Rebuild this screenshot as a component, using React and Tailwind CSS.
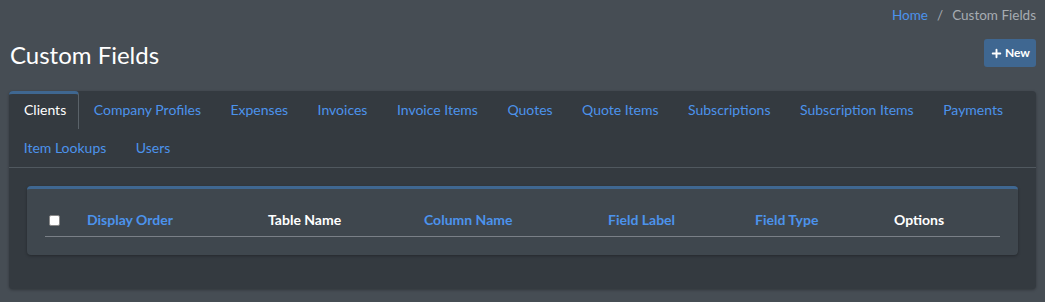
import { Plus } from "lucide-react";

const tabs = [
  "Clients",
  "Company Profiles",
  "Expenses",
  "Invoices",
  "Invoice Items",
  "Quotes",
  "Quote Items",
  "Subscriptions",
  "Subscription Items",
  "Payments",
  "Item Lookups",
  "Users",
];

const columns = [
  { label: "Display Order", w: "w-[181px]", link: true },
  { label: "Table Name", w: "w-[156px]", link: false },
  { label: "Column Name", w: "w-[184px]", link: true },
  { label: "Field Label", w: "w-[147px]", link: true },
  { label: "Field Type", w: "w-[139px]", link: true },
  { label: "Options", w: "flex-1", link: false },
];

const App = () => {
  return (
    <div
      className="min-h-[302px] bg-[#464d54] px-[9px] pb-[13px]"
      style={{ fontFamily: "Lato, 'Liberation Sans', sans-serif" }}
    >
      <div className="flex h-[30px] items-end justify-end pb-[4px] text-[13.5px] leading-[22px]">
        <a className="text-[#4c93ec]">Home</a>
        <span className="px-[9px] text-[#a6acb2]">/</span>
        <span className="text-[#a6acb2]">Custom Fields</span>
      </div>

      <div className="flex items-start justify-between pl-[1px]">
        <h1 className="mt-[8px] text-[24px] leading-[34px] text-white">Custom Fields</h1>
        <button className="mt-[9px] flex h-[28px] items-center gap-[2px] rounded-[3px] bg-[#3f6791] px-[6px] text-[12px] font-bold text-white">
          <Plus size={13} strokeWidth={3.5} />
          New
        </button>
      </div>

      <div className="mt-[19px] rounded-[4px] bg-[#343a40] shadow-[0_1px_3px_rgba(0,0,0,0.3)]">
        <div className="flex flex-wrap border-b border-[#50585f] text-[14px] leading-[22px]">
          {tabs.map((t, i) =>
            i === 0 ? (
              <div
                key={t}
                className="w-[70px] rounded-t-[4px] border-t-[3px] border-r border-t-[#3f6791] border-r-[#5a6269] pl-[15px] pt-[5px] pb-[8px] text-white"
              >
                {t}
              </div>
            ) : (
              <a key={t} className="px-[14.75px] py-[8px] text-[#4c93ec]">
                {t}
              </a>
            )
          )}
        </div>

        <div className="p-[18px] pb-[34px]">
          <div className="rounded-[4px] border-t-[3px] border-[#3f6791] bg-[#3f474e] px-[18px] pt-[15px] pb-[18px] shadow-[0_1px_3px_rgba(0,0,0,0.3)]">
            <div className="flex h-[33px] items-center border-b border-[#7a8087] text-[14px] font-bold leading-[20px]">
              <div className="w-[42px] pl-[4px]">
                <div className="h-[11px] w-[11px] rounded-[2px] border border-[#888] bg-white"></div>
              </div>
              {columns.map((c) => (
                <div
                  key={c.label}
                  className={`${c.w} ${c.link ? "text-[#4c93ec]" : "text-white"}`}
                >
                  {c.label}
                </div>
              ))}
            </div>
          </div>
        </div>
      </div>
    </div>
  );
};

export default App;
